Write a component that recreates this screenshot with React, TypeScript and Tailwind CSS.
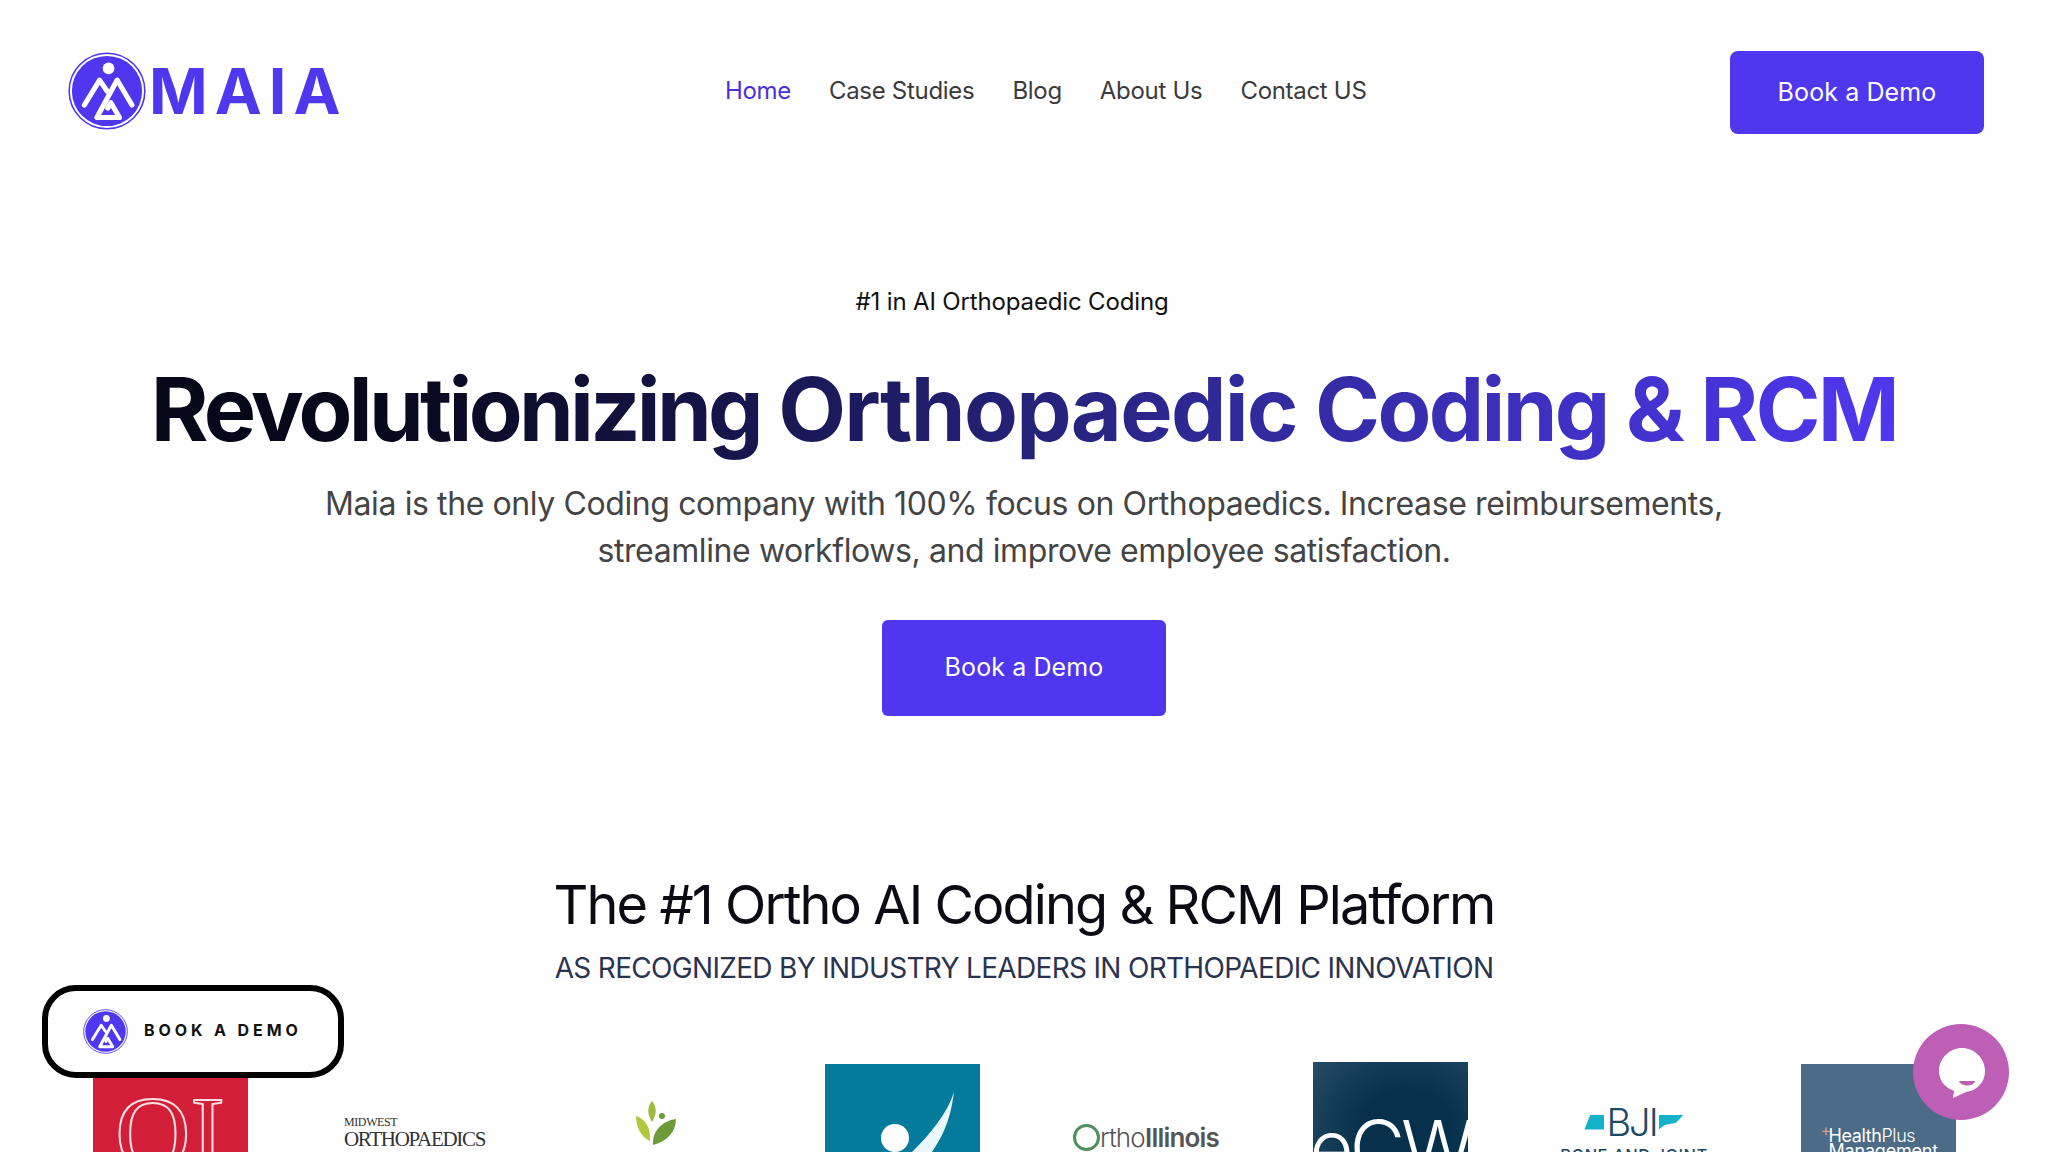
const LogoMark = ({ className }: { className: string }) => (
  <svg viewBox="0 0 100 100" className={className} fill="none">
    <circle cx="50" cy="50" r="48.5" stroke="#4f37f0" strokeWidth="2" />
    <circle cx="50" cy="50" r="45" fill="#4f37f0" />
    <circle cx="52" cy="21" r="7.5" fill="#fff" />
    <path d="M21 68L40.5 36L50 50" stroke="#fff" strokeWidth="6.5" strokeLinecap="round" strokeLinejoin="round" />
    <path d="M82 68L63 36L37 84H66L55 65L51 72" stroke="#fff" strokeWidth="6.5" strokeLinecap="round" strokeLinejoin="round" />
  </svg>
);

const navItems = ["Case Studies", "Blog", "About Us", "Contact US"];
const font = "font-['Inter','Noto_Sans',sans-serif]";

export default function App() {
  return (
    <div className={`relative h-screen w-full overflow-hidden bg-white ${font}`}>
      <header className="flex items-center justify-between pl-[68px] pr-[64px] pt-[51px]">
        <div className="mb-[3px] flex items-center gap-[3px]">
          <LogoMark className="h-[78px] w-[78px]" />
          <span className="font-['Inter',sans-serif] text-[63px] font-bold leading-none tracking-[7px] text-[#4f37f0]">MAIA</span>
        </div>
        <nav className="mb-[3px] ml-[14px] flex items-center gap-[38px] text-[24px] leading-none text-[#3b3b3b] tracking-[-0.3px]">
          <a className="text-[#4a32d6]">Home</a>
          {navItems.map((n) => (
            <a key={n}>{n}</a>
          ))}
        </nav>
        <button className="flex h-[83px] w-[254px] items-center justify-center rounded-[8px] bg-[#4f37f0] text-[25px] tracking-[0.1px] text-white">
          Book a Demo
        </button>
      </header>

      <section className="flex flex-col items-center pt-[152px]">
        <p className="mr-[24px] text-[24px] leading-[32px] tracking-[-0.15px] text-[#111]">#1 in AI Orthopaedic Coding</p>
        <h1 className="mt-[36px] bg-gradient-to-r from-[#07071a] from-[12%] via-[#2f2a9a] via-[62%] to-[#4f37f0] bg-clip-text pb-[12px] text-[88px] font-bold leading-[110px] tracking-[-2.7px] text-transparent">
          <span className="tracking-[-3.7px]">Revolutionizing</span> <span className="tracking-[-1.7px]">Orthopaedic</span> Coding &amp; RCM
        </h1>
        <p className="mt-[4px] w-[1500px] text-center text-[32px] leading-[47px] tracking-[-0.4px] text-[#444]">
          Maia is the only Coding company with 100% focus on Orthopaedics. Increase reimbursements,
          <br />
          streamline workflows, and improve employee satisfaction.
        </p>
        <button className="mt-[46px] flex h-[96px] w-[284px] items-center justify-center rounded-[6px] bg-[#4f37f0] text-[25px] tracking-[0.1px] text-white">
          Book a Demo
        </button>
        <h2 className="mt-[153px] text-[54px] leading-[72px] tracking-[-1.9px] text-[#0b0b14]">The #1 Ortho AI Coding &amp; RCM Platform</h2>
        <p className="mt-[7px] text-[28px] leading-[40px] tracking-[-0.68px] text-[#2a3350]">AS RECOGNIZED BY INDUSTRY LEADERS IN ORTHOPAEDIC INNOVATION</p>
      </section>

      <section className="mt-[76px] grid grid-cols-8 items-start px-[48px]">
        <div className="flex justify-center">
          <div className="flex h-[155px] w-[155px] items-start justify-center bg-[#d21f37] pt-[24px]">
            <span className="font-['Liberation_Serif',serif] text-[104px] leading-[90px] text-[#d21f37] [-webkit-text-stroke:2px_#f5dfe2]">QI</span>
          </div>
        </div>
        <div className="flex justify-center pl-[2px] pt-[52px]">
          <div className="w-[142px] font-['Liberation_Serif',serif] text-[#333]">
            <div className="text-[12px] leading-[13px] tracking-[-0.4px]">MIDWEST</div>
            <div className="text-[21px] leading-[21px] tracking-[-1.3px] whitespace-nowrap">ORTHOPAEDICS</div>
            <div className="pl-[18px] text-[16px] leading-[16px] tracking-[1px] text-[#2f6f52]">RUSH</div>
          </div>
        </div>
        <div className="flex flex-col items-center pr-[4px] pt-[37px]">
          <svg viewBox="0 0 40 44" className="h-[44px] w-[40px]">
            <path d="M16 0C21 6 21 13 16 21C11 13 11 6 16 0Z" fill="#9dbb3c" />
            <circle cx="26" cy="15" r="3" fill="#6f9a3a" />
            <path d="M0 15C9 18 15 26 14 40C5 36 0 26 0 15Z" fill="#b2c83e" />
            <path d="M40 18C40 30 32 40 17 44C16 30 26 20 40 18Z" fill="#6f9a3a" />
          </svg>
          <span className="mt-[5px] text-[11px] leading-[14px] text-[#555]">Ortho Care</span>
        </div>
        <div className="flex justify-center">
          <div className="relative h-[155px] w-[155px] overflow-hidden bg-[#047a9c]">
            <svg viewBox="0 0 155 155" className="h-full w-full">
              <ellipse cx="70" cy="74" rx="14" ry="14" fill="#fff" />
              <path d="M129 28C125 60 115 76 107 88L90 110L68 110L87 88C105 70 122 50 129 28Z" fill="#eaf7fb" />
            </svg>
          </div>
        </div>
        <div className="flex justify-center pt-[60px]">
          <div className="flex items-center">
            <span className="box-border h-[27px] w-[27px] rounded-full border-[3px] border-[#4f8f5a]" />
            <span className="text-[26px] leading-[27px] tracking-[-0.8px] text-[#555]">
              <span className="font-light">rtho</span>
              <span className="font-semibold">Illinois</span>
            </span>
          </div>
        </div>
        <div className="flex justify-center">
          <div className="-mt-[2px] flex h-[157px] w-[155px] items-start justify-center overflow-hidden bg-[radial-gradient(ellipse_at_60%_45%,#06304c_35%,#2c5068_100%)] pt-[40px]">
            <span className="text-[76px] font-light leading-[90px] tracking-[-4px] text-white">eCW</span>
          </div>
        </div>
        <div className="flex flex-col items-center pt-[43px]">
          <div className="flex items-center gap-[2px]">
            <span className="h-[15px] w-[20px] bg-[#12b3c9] [clip-path:polygon(30%_0,100%_0,100%_100%,0_100%)]" />
            <span className="text-[38px] font-light leading-[30px] tracking-[-2px] text-[#1c4a66]">BJI</span>
            <span className="h-[15px] w-[25px] bg-[#12b3c9] [clip-path:polygon(0_0,100%_0,70%_55%,25%_70%,0_100%)]" />
          </div>
          <span className="mt-[9px] whitespace-nowrap text-[16.5px] font-medium leading-[18px] tracking-[0.5px] text-[#1c4a66]">BONE AND JOINT</span>
        </div>
        <div className="flex justify-center">
          <div className="relative h-[155px] w-[155px] overflow-hidden bg-[#4b6b87] pl-[28px] pt-[64px] leading-[15px] text-white">
            <span className="absolute left-[20px] top-[58px] text-[16px] leading-none text-[#d79a8a]">+</span>
            <div className="text-[18px] tracking-[-0.4px]">
              Health<span className="font-light">Plus</span>
            </div>
            <div className="text-[18px] tracking-[-0.2px]">Management</div>
          </div>
        </div>
      </section>

      <div className="absolute left-[42px] top-[985px] flex h-[93px] w-[302px] items-center rounded-[34px] border-[6px] border-black bg-white pl-[35px]">
        <LogoMark className="h-[45px] w-[45px]" />
        <span className="mb-[4px] ml-[16px] text-[16px] font-bold leading-none tracking-[3.9px] text-[#111]">BOOK A DEMO</span>
      </div>

      <div className="absolute left-[1913px] top-[1024px] flex h-[96px] w-[96px] items-center justify-center rounded-full bg-[#bc5fb5]">
        <svg viewBox="0 0 50 56" className="h-[56px] w-[50px]">
          <path d="M26 4C38 4 49 14 49 27C49 40 39 47 30 48L17 54L18 47C8 43 3 36 3 27C3 14 14 4 26 4Z" fill="#fff" />
          <path d="M23 37H39C38 43 25 43 23 37Z" fill="#bc5fb5" />
        </svg>
      </div>
    </div>
  );
}
